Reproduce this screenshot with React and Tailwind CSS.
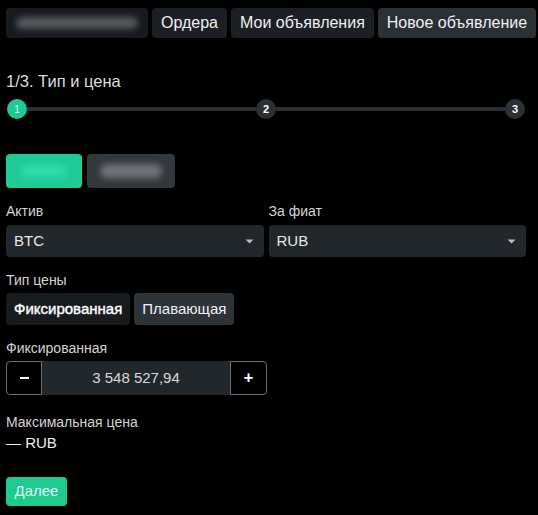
import React from "react";

const font = {fontFamily: '"Liberation Sans", Arial, sans-serif'};

function NavButton({children, active}) {
    return (
        <button
            className={active
                ? "h-[30px] px-[9px] shrink-0 whitespace-nowrap rounded bg-[#2b3035] text-[16px] text-[#f1f1f1]"
                : "h-[30px] px-[9px] shrink-0 whitespace-nowrap rounded bg-[#1c1f23] text-[16px] text-[#f1f1f1]"}>
            {children}
        </button>
    );
}

function Step({n, active}) {
    return (
        <div
            className={active
                ? "w-[20px] h-[20px] rounded-full bg-[#20c997] text-[10px] text-[#dffcf0] flex items-center justify-center shrink-0"
                : "w-[20px] h-[20px] rounded-full bg-[#2b3035] text-[11px] font-bold text-white flex items-center justify-center shrink-0"}>
            {n}
        </div>
    );
}

function Select({value}) {
    return (
        <div className="flex-1 h-[32px] bg-[#22272c] rounded-sm flex items-center justify-between pl-[8px] pr-[10px]">
            <span className="text-[15px] text-[#e8e8e8]">{value}</span>
            <svg width="9" height="5" viewBox="0 0 9 5">
                <path d="M0.5 0.5 L8.5 0.5 L4.5 4.5 Z" fill="#b8bcc0"/>
            </svg>
        </div>
    );
}

export default function App() {
    return (
        <div className="min-h-[515px] bg-black text-[#e6e6e6] pl-[6px] pr-[12px] overflow-hidden" style={font}>
            {/* top nav */}
            <div className="flex gap-[4px] pt-[8px] mr-[-12px]">
                <button className="h-[30px] w-[142px] shrink-0 rounded bg-[#171a1e] flex items-center justify-center">
                    <span className="block w-[122px] h-[12px] rounded-full bg-[#55595d] blur-[3px]"/>
                </button>
                <NavButton>Ордера</NavButton>
                <NavButton>Мои объявления</NavButton>
                <NavButton active>Новое объявление</NavButton>
            </div>

            <div className="mt-[33px] text-[16.5px] text-[#dcdcdc] leading-[20px]">1/3. Тип и цена</div>

            {/* stepper */}
            <div className="mt-[8px] flex items-center pl-[1px] pr-[1px]">
                <Step n="1" active/>
                <div className="flex-1 h-[4px] bg-[#2b3035]"/>
                <Step n="2"/>
                <div className="flex-1 h-[4px] bg-[#2b3035]"/>
                <Step n="3"/>
            </div>

            {/* buy/sell */}
            <div className="mt-[35px] flex gap-[5px]">
                <button className="h-[34px] w-[76px] rounded bg-[#1fca96] flex items-center justify-center">
                    <span className="block w-[46px] h-[12px] rounded-full bg-[#2fdcaa] blur-[3px]"/>
                </button>
                <button className="h-[34px] w-[88px] rounded bg-[#33383d] flex items-center justify-center">
                    <span className="block w-[62px] h-[14px] rounded-full bg-[#6f7377] blur-[3px]"/>
                </button>
            </div>

            <div className="mt-[14px] flex gap-[5px]">
                <div className="flex-1">
                    <div className="text-[14px] text-[#d4d4d4] leading-[18px]">Актив</div>
                    <div className="mt-[5px] flex"><Select value="BTC"/></div>
                </div>
                <div className="flex-1">
                    <div className="text-[14px] text-[#d4d4d4] leading-[18px]">За фиат</div>
                    <div className="mt-[5px] flex"><Select value="RUB"/></div>
                </div>
            </div>

            <div className="mt-[14px] text-[14px] text-[#d4d4d4] leading-[18px]">Тип цены</div>
            <div className="mt-[4px] flex gap-[4px]">
                <button className="h-[32px] px-[8px] rounded bg-[#181b1e] text-[15px] text-white [-webkit-text-stroke:0.4px_white]">Фиксированная</button>
                <button className="h-[32px] px-[8px] rounded bg-[#2e3338] text-[15px] text-[#f2f2f2]">Плавающая</button>
            </div>

            <div className="mt-[14px] text-[14px] text-[#d4d4d4] leading-[18px]">Фиксированная</div>
            <div className="mt-[4px] flex h-[34px] w-[261px]">
                <button className="w-[36px] h-full rounded-l border border-[#6c7075] bg-black flex items-center justify-center">
                    <span className="block w-[9px] h-[2px] bg-white"/>
                </button>
                <div className="flex-1 bg-[#22272c] flex items-center justify-center text-[15px] text-[#d8d8d8]">3 548 527,94</div>
                <button className="w-[37px] h-full rounded-r border border-[#6c7075] bg-black flex items-center justify-center text-[17px] font-bold text-white">+</button>
            </div>

            <div className="mt-[18px] text-[14px] text-[#d4d4d4] leading-[18px]">Максимальная цена</div>
            <div className="mt-[3px] text-[15px] text-[#eeeeee] leading-[18px]">— RUB</div>

            <button className="mt-[25px] h-[29px] w-[61px] rounded bg-[#1fca8e] text-[15px] text-[#d9fff6]">Далее</button>
        </div>
    );
}
